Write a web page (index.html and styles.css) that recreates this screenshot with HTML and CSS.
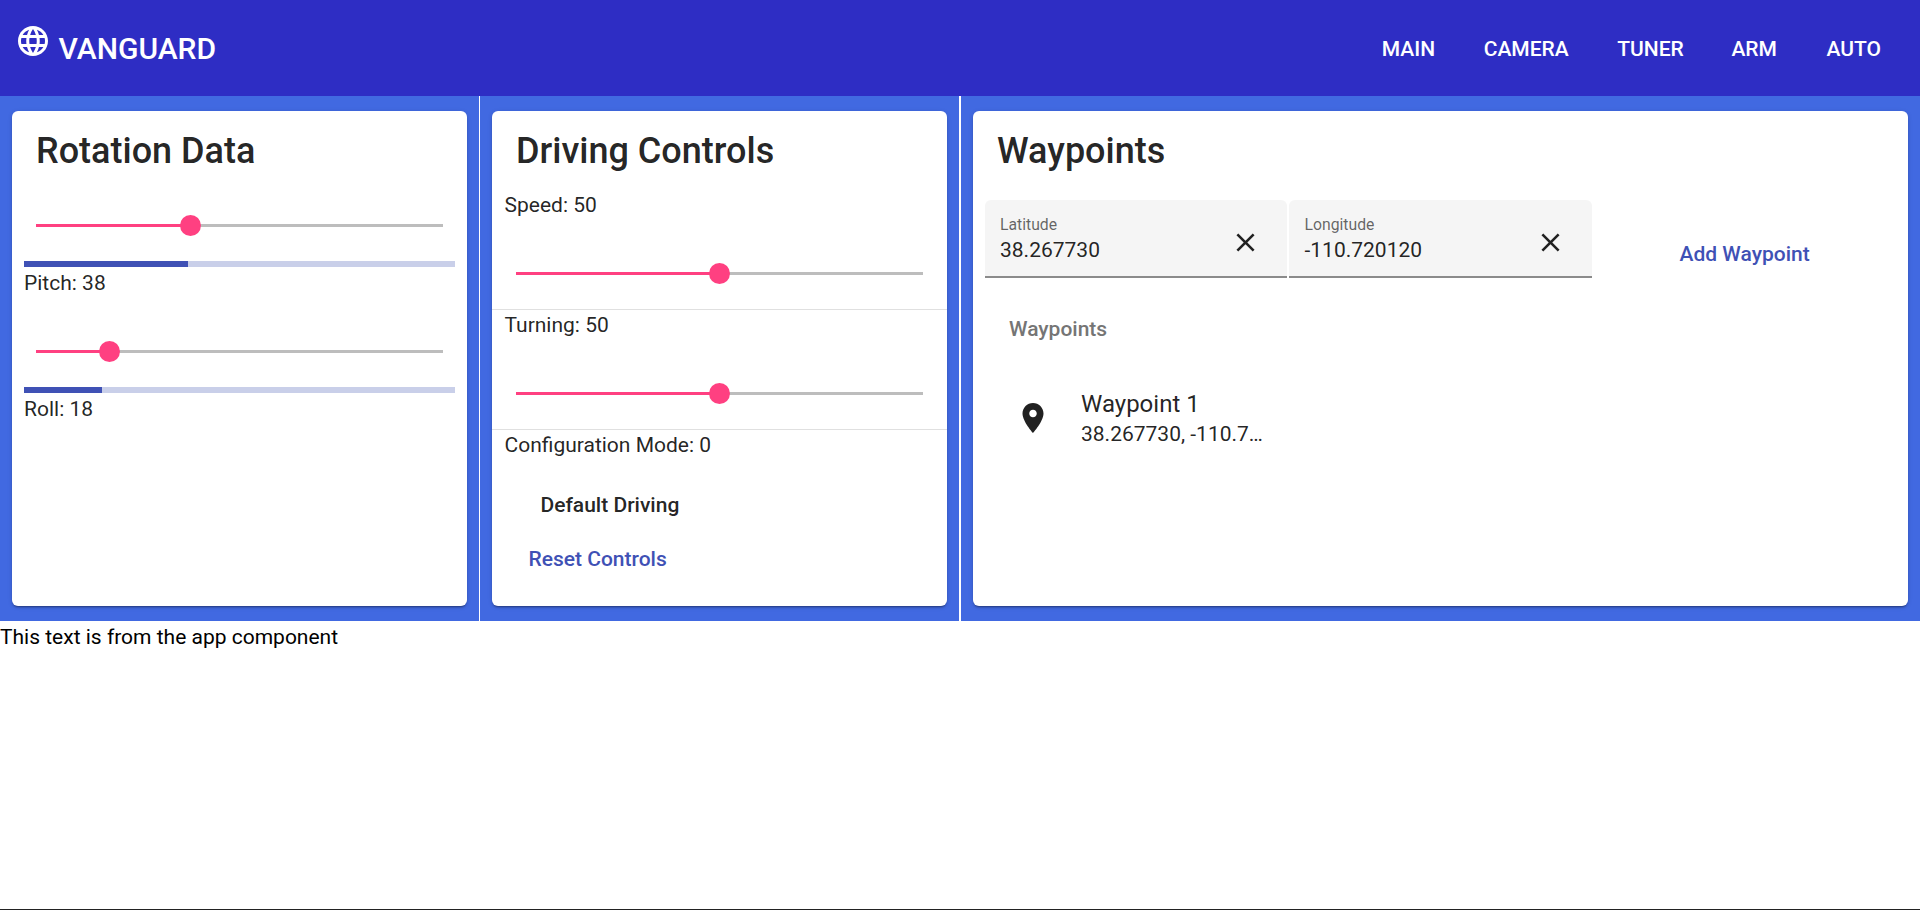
FILE: index.html
```html
<!DOCTYPE html>
<html lang="en">

<head>
    <meta charset="utf-8">
    <title>Vanguard</title>
    <link rel="stylesheet" href="styles.css">
</head>

<body>
    <header class="toolbar">
        <svg class="globe" viewBox="0 0 24 24"><path d="M11.99 2C6.47 2 2 6.48 2 12s4.47 10 9.99 10C17.52 22 22 17.52 22 12S17.52 2 11.99 2zm6.93 6h-2.95c-.32-1.25-.78-2.45-1.38-3.56 1.84.63 3.37 1.91 4.33 3.56zM12 4.04c.83 1.2 1.48 2.53 1.91 3.96h-3.82c.43-1.43 1.08-2.76 1.91-3.96zM4.26 14C4.1 13.36 4 12.69 4 12s.1-1.36.26-2h3.38c-.08.66-.14 1.32-.14 2s.06 1.34.14 2H4.26zm.82 2h2.95c.32 1.25.78 2.45 1.38 3.56-1.84-.63-3.37-1.9-4.33-3.56zm2.95-8H5.08c.96-1.66 2.49-2.93 4.33-3.56C8.81 5.55 8.35 6.75 8.03 8zM12 19.96c-.83-1.2-1.48-2.53-1.91-3.96h3.82c-.43 1.43-1.08 2.76-1.91 3.96zM14.34 14H9.66c-.09-.66-.16-1.32-.16-2s.07-1.35.16-2h4.68c.09.65.16 1.32.16 2s-.07 1.34-.16 2zm.25 5.56c.6-1.11 1.06-2.31 1.38-3.56h2.95c-.96 1.65-2.49 2.93-4.33 3.56zM16.36 14c.08-.66.14-1.32.14-2s-.06-1.34-.14-2h3.38c.16.64.26 1.31.26 2s-.1 1.36-.26 2h-3.38z"/></svg>
        <span class="brand">VANGUARD</span>
        <nav class="nav">
            <a>MAIN</a>
            <a>CAMERA</a>
            <a>TUNER</a>
            <a>ARM</a>
            <a>AUTO</a>
        </nav>
    </header>

    <main class="panels">
        <section class="panel">
            <div class="card">
                <h1>Rotation Data</h1>
                <div class="reading">
                    <div class="slider">
                        <div class="slider-fill" style="width: 38%"></div>
                        <div class="slider-thumb" style="left: 38%"></div>
                    </div>
                    <div class="progress"><div class="progress-fill" style="width: 38%"></div></div>
                    <p>Pitch: 38</p>
                </div>
                <div class="reading">
                    <div class="slider">
                        <div class="slider-fill" style="width: 18%"></div>
                        <div class="slider-thumb" style="left: 18%"></div>
                    </div>
                    <div class="progress"><div class="progress-fill" style="width: 18%"></div></div>
                    <p>Roll: 18</p>
                </div>
            </div>
        </section>

        <section class="panel">
            <div class="card">
                <h1>Driving Controls</h1>
                <div class="control">
                    <p>Speed: 50</p>
                    <div class="slider">
                        <div class="slider-fill" style="width: 50%"></div>
                        <div class="slider-thumb" style="left: 50%"></div>
                    </div>
                </div>
                <div class="control">
                    <p>Turning: 50</p>
                    <div class="slider">
                        <div class="slider-fill" style="width: 50%"></div>
                        <div class="slider-thumb" style="left: 50%"></div>
                    </div>
                </div>
                <div class="mode">
                    <p>Configuration Mode: 0</p>
                    <div class="mode-name">Default Driving</div>
                    <button class="button">Reset Controls</button>
                </div>
            </div>
        </section>

        <section class="panel panel-wide">
            <div class="card">
                <h1>Waypoints</h1>
                <div class="fields">
                    <div class="field">
                        <div class="field-text">
                            <label>Latitude</label>
                            <span>38.267730</span>
                        </div>
                        <svg class="close" viewBox="0 0 24 24"><path d="M19 6.41L17.59 5 12 10.59 6.41 5 5 6.41 10.59 12 5 17.59 6.41 19 12 13.41 17.59 19 19 17.59 13.41 12z"/></svg>
                    </div>
                    <div class="field">
                        <div class="field-text">
                            <label>Longitude</label>
                            <span>-110.720120</span>
                        </div>
                        <svg class="close" viewBox="0 0 24 24"><path d="M19 6.41L17.59 5 12 10.59 6.41 5 5 6.41 10.59 12 5 17.59 6.41 19 12 13.41 17.59 19 19 17.59 13.41 12z"/></svg>
                    </div>
                    <button class="button add">Add Waypoint</button>
                </div>
                <h3>Waypoints</h3>
                <div class="waypoint">
                    <svg class="pin" viewBox="0 0 24 24"><path d="M12 2C8.13 2 5 5.13 5 9c0 5.25 7 13 7 13s7-7.75 7-13c0-3.87-3.13-7-7-7zm0 9.5c-1.38 0-2.5-1.12-2.5-2.5s1.12-2.5 2.5-2.5 2.5 1.12 2.5 2.5-1.12 2.5-2.5 2.5z"/></svg>
                    <div class="waypoint-text">
                        <div class="waypoint-name">Waypoint 1</div>
                        <div class="waypoint-coords">38.267730, -110.7…</div>
                    </div>
                </div>
            </div>
        </section>
    </main>

    <p class="app-text">This text is from the app component</p>
    <div class="bottom-line"></div>
</body>

</html>
```

FILE: styles.css
```css
* {
    box-sizing: border-box;
}

body {
    margin: 0;
    height: 910px;
    display: flex;
    flex-direction: column;
    overflow: hidden;
    font-family: Roboto, "Liberation Sans", sans-serif;
    font-size: 21px;
    line-height: 24px;
    color: #000;
    background: #fff;
}

p {
    margin: 0;
}

h1 {
    margin: 0;
    padding: 0 24px;
    height: 77px;
    font-size: 36px;
    font-weight: 500;
    line-height: 80px;
}

/* Toolbar */
.toolbar {
    display: flex;
    height: 96px;
    padding: 0 39px 0 15px;
    background: #2e2dc4;
    color: #fff;
    font-weight: 500;
}

.globe {
    width: 36px;
    height: 36px;
    margin-top: 23px;
    fill: #fff;
}

.brand {
    margin-left: 7.5px;
    font-size: 30px;
    line-height: 97px;
}

.nav {
    display: flex;
    gap: 48.6px;
    margin-left: auto;
    line-height: 98px;
}

.nav a:nth-child(4) {
    margin: 0 1px 0 -1px;
}

/* Panels */
.panels {
    display: grid;
    grid-template-columns: 479px 479px 959px;
    column-gap: 1px;
    height: 525px;
}

.panel {
    padding: 15px 12px;
    background: #4169e1;
}

.panel-wide {
    margin-left: 1px;
    width: 959px;
}

.card {
    height: 495px;
    border-radius: 6px;
    background: #fff;
    color: rgba(0, 0, 0, 0.87);
    box-shadow: 0 3px 1px -2px rgba(0, 0, 0, 0.2), 0 2px 2px 0 rgba(0, 0, 0, 0.14), 0 1px 5px 0 rgba(0, 0, 0, 0.12);
}

/* Slider */
.slider {
    position: relative;
    height: 3px;
    margin: 0 12px;
    background: #bdbdbd;
}

.slider-fill {
    height: 3px;
    background: #ff4081;
}

.slider-thumb {
    position: absolute;
    top: -9px;
    width: 21px;
    height: 21px;
    margin-left: -10.5px;
    border-radius: 50%;
    background: #ff4081;
}

/* Rotation data */
.reading {
    height: 126px;
    padding: 36px 12px 0;
}

.progress {
    height: 6px;
    margin: 34px 0 4px;
    background: #c9cfe9;
}

.progress-fill {
    height: 6px;
    background: #3f51b5;
}

/* Driving controls */
.control {
    height: 120px;
    padding: 3px 12px 0;
    border-bottom: 1px solid rgba(0, 0, 0, 0.12);
}

.control:nth-child(2) {
    height: 122px;
    padding-top: 5px;
}

.control p {
    padding-left: 0.5px;
}

.control .slider {
    margin-top: 55px;
}

.mode {
    padding: 3px 12.5px 0;
}

.mode-name {
    padding: 36px 36px 30px;
    font-weight: 500;
}

.button {
    display: block;
    padding: 0 24px;
    border: none;
    background: none;
    color: #3f51b5;
    font: inherit;
    font-weight: 500;
}

/* Waypoints */
.fields {
    display: flex;
    gap: 2px;
    padding: 12px 12px 0;
}

.field {
    display: flex;
    justify-content: space-between;
    width: 302px;
    height: 78px;
    padding: 0 26px 0 15px;
    border-bottom: 2px solid #8b8b8b;
    border-radius: 6px 6px 0 0;
    background: #f5f5f5;
}

.field + .field {
    width: 303px;
    padding: 0 26.5px 0 15.5px;
}

.field-text {
    display: flex;
    flex-direction: column;
    padding-top: 13px;
    gap: 1px;
}

.field label {
    font-size: 15.75px;
    color: rgba(0, 0, 0, 0.6);
}

.close {
    width: 31px;
    height: 31px;
    margin-top: 26.5px;
    fill: rgba(0, 0, 0, 0.87);
}

.add {
    height: 36px;
    margin: 36px 0 0 61.5px;
}

h3 {
    margin: 39px 36px 0;
    font-size: 21px;
    font-weight: 500;
    line-height: 24px;
    color: #757575;
}

.waypoint {
    display: flex;
    align-items: center;
    height: 108px;
    margin-top: 24px;
    padding: 0 42px;
}

.pin {
    width: 36px;
    height: 36px;
    margin-bottom: 2px;
    fill: rgba(0, 0, 0, 0.87);
}

.waypoint-text {
    width: 185px;
    margin-left: 30px;
}

.waypoint-name {
    font-size: 24px;
    line-height: 30px;
}

.waypoint-coords {
    line-height: 30px;
    white-space: nowrap;
}

.app-text {
    padding-top: 4px;
}

.bottom-line {
    height: 1px;
    margin-top: auto;
    background: #222;
}
```
